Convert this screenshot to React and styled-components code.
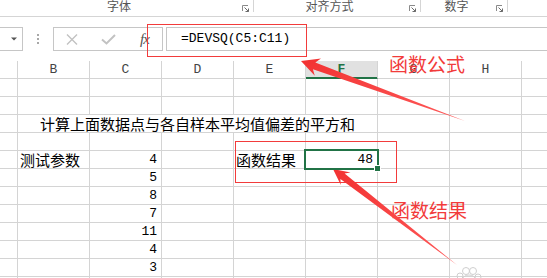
import React from 'react'
import styled, { createGlobalStyle } from 'styled-components'

const GlobalStyle = createGlobalStyle`
  html, body {
    margin: 0;
    padding: 0;
    background: #fff;
  }
  body {
    width: 547px;
    height: 278px;
    overflow: hidden;
    font-family: 'Noto Sans CJK SC', 'Noto Sans', sans-serif;
  }
`

const GRID = '#d4d4d4'
const GREEN = '#217346'
const RED = '#f23b3b'

const Screen = styled.div`
  position: relative;
  width: 547px;
  height: 278px;
  overflow: hidden;
  background: #fff;
`

const Ribbon = styled.div`
  display: flex;
  height: 16px;
  border-bottom: 1px solid #d5d5d5;
`

const Group = styled.div`
  display: flex;
  width: ${p => p.$w}px;
  height: 12px;
  border-right: 1px solid #d5d5d5;
`

const GroupLabel = styled.div`
  flex: 1;
  text-align: center;
  font-size: 12px;
  line-height: 14px;
  margin-top: -1px;
  color: #555;
`

const Launcher = styled.div`
  width: 15px;
  padding: 5px 0 0 4px;
  box-sizing: border-box;
  line-height: 0;
`

const FormulaBar = styled.div`
  display: flex;
  height: 24px;
  margin-top: 10px;
`

const NameBox = styled.div`
  width: 23px;
  border: 1px solid #c6c6c6;
  border-left: none;
  display: flex;
  align-items: center;
  padding-left: 11px;
  box-sizing: border-box;
`

const Grip = styled.div`
  width: 30px;
  display: flex;
  flex-direction: column;
  align-items: center;
  justify-content: center;
  gap: 2px;
`

const GripDot = styled.span`
  width: 2px;
  height: 2px;
  background: #a8a8a8;
`

const ButtonBox = styled.div`
  display: flex;
  border: 1px solid #c6c6c6;
`

const BarButton = styled.div`
  width: 36px;
  display: flex;
  align-items: center;
  justify-content: center;
`

const Fx = styled.span`
  font-family: 'Liberation Serif', serif;
  font-style: italic;
  font-size: 15px;
  color: #555;
  letter-spacing: -1px;
  margin-left: 1px;
`

const FormulaInput = styled.div`
  flex: 1;
  margin-left: 3px;
  border: 1px solid #c6c6c6;
  border-right: none;
  padding-left: 14px;
  font-family: 'Liberation Mono', monospace;
  font-size: 13px;
  line-height: 22px;
  color: #000;
`

const Sheet = styled.div`
  display: grid;
  grid-template-columns: 18px repeat(8, 72px);
  grid-auto-rows: 18px;
  margin-top: 10px;
`

const HeadCell = styled.div`
  box-sizing: border-box;
  border-right: 1px solid ${GRID};
  border-bottom: 1px solid ${p => (p.$active ? GREEN : GRID)};
  box-shadow: ${p => (p.$active ? `inset 0 -1px 0 ${GREEN}` : 'none')};
  background: ${p => (p.$active ? '#e1e1e1' : '#fff')};
  color: ${p => (p.$active ? GREEN : '#444')};
  font-family: 'Liberation Mono', monospace;
  font-weight: ${p => (p.$active ? 700 : 400)};
  font-size: 13px;
  line-height: 18px;
  text-align: center;
`

const Cell = styled.div`
  position: relative;
  box-sizing: border-box;
  grid-column: span ${p => p.$span};
  border-right: 1px solid ${GRID};
  border-bottom: 1px solid ${GRID};
  padding: 0 ${p => (p.$num ? '4px' : '2px')} 0 ${p => p.$indent}px;
  text-align: ${p => (p.$num ? 'right' : 'left')};
  font-family: ${p => (p.$num ? "'Liberation Mono', monospace" : "'Noto Sans CJK SC', sans-serif")};
  font-size: ${p => (p.$num ? '13px' : '15px')};
  line-height: 17px;
  color: #000;
  white-space: nowrap;
  z-index: ${p => (p.$selected ? 2 : 0)};

  ${p =>
    p.$selected &&
    `
    &::after {
      content: '';
      position: absolute;
      top: -2px;
      left: -2px;
      right: -2px;
      bottom: -2px;
      border: 2px solid ${GREEN};
    }
    &::before {
      content: '';
      position: absolute;
      right: -4px;
      bottom: -4px;
      width: 5px;
      height: 5px;
      background: ${GREEN};
      border: 1px solid #fff;
      z-index: 3;
    }
  `}
`

const Frame = styled.div`
  position: absolute;
  left: ${p => p.$x}px;
  top: ${p => p.$y}px;
  width: ${p => p.$w}px;
  height: ${p => p.$h}px;
  box-sizing: border-box;
  border: 1px solid ${RED};
  pointer-events: none;
`

const Note = styled.div`
  position: absolute;
  left: ${p => p.$x}px;
  top: ${p => p.$y}px;
  font-family: 'Noto Sans CJK SC', sans-serif;
  font-size: 19px;
  line-height: 19px;
  color: ${RED};
  white-space: nowrap;
`

const Overlay = styled.svg`
  position: absolute;
  left: 0;
  top: 0;
  pointer-events: none;
`

const LauncherIcon = () => (
  <svg width="7" height="7" viewBox="0 0 7 7">
    <path d="M0.5 6V0.5H6" fill="none" stroke="#8a8a8a" strokeWidth="1" />
    <path d="M2.5 2.5L6.5 6.5M6.5 3.5V6.5H3.5" fill="none" stroke="#6a6a6a" strokeWidth="1" />
  </svg>
)

const letters = ['A', 'B', 'C', 'D', 'E', 'F', 'G', 'H', 'I']

const rows = [
  {},
  {},
  { B: { v: '计算上面数据点与各自样本平均值偏差的平方和', span: 5, indent: 22 } },
  {},
  { B: { v: '测试参数' }, C: { v: 4 }, E: { v: '函数结果' }, F: { v: 48, selected: true } },
  { C: { v: 5 } },
  { C: { v: 8 } },
  { C: { v: 7 } },
  { C: { v: 11 } },
  { C: { v: 4 } },
  { C: { v: 3 } },
  {},
]

const App = () => {
  return (
    <Screen>
      <GlobalStyle />
      <Ribbon>
        <Group $w={253}>
          <GroupLabel>字体</GroupLabel>
          <Launcher><LauncherIcon /></Launcher>
        </Group>
        <Group $w={166}>
          <GroupLabel>对齐方式</GroupLabel>
          <Launcher><LauncherIcon /></Launcher>
        </Group>
        <Group $w={86}>
          <GroupLabel>数字</GroupLabel>
          <Launcher><LauncherIcon /></Launcher>
        </Group>
      </Ribbon>

      <FormulaBar>
        <NameBox>
          <svg width="6" height="4" viewBox="0 0 6 4">
            <path d="M0 0.5H6L3 3.5Z" fill="#555" />
          </svg>
        </NameBox>
        <Grip>
          <GripDot />
          <GripDot />
          <GripDot />
        </Grip>
        <ButtonBox>
          <BarButton>
            <svg width="12" height="11" viewBox="0 0 12 11">
              <path d="M1 0.5L11 10.5M11 0.5L1 10.5" stroke="#c2c2c2" strokeWidth="1.4" />
            </svg>
          </BarButton>
          <BarButton>
            <svg width="15" height="11" viewBox="0 0 15 11">
              <path d="M1 5.5L5.5 9.5L14 1" fill="none" stroke="#c2c2c2" strokeWidth="2" />
            </svg>
          </BarButton>
          <BarButton>
            <Fx>fx</Fx>
          </BarButton>
        </ButtonBox>
        <FormulaInput>=DEVSQ(C5:C11)</FormulaInput>
      </FormulaBar>

      <Sheet>
        {letters.map(l => (
          <HeadCell key={l} $active={l === 'F'}>
            {l === 'A' || l === 'I' ? '' : l}
          </HeadCell>
        ))}
        {rows.map((row, r) => {
          const cells = []
          for (let c = 0; c < letters.length; c++) {
            const d = row[letters[c]]
            const span = (d && d.span) || 1
            cells.push(
              <Cell
                key={`${r}-${c}`}
                $span={span}
                $num={d && typeof d.v === 'number'}
                $indent={(d && d.indent) || (d && typeof d.v === 'number' ? 0 : 2)}
                $selected={d && d.selected}
              >
                {d ? d.v : ''}
              </Cell>
            )
            c += span - 1
          }
          return <React.Fragment key={r}>{cells}</React.Fragment>
        })}
      </Sheet>

      <Frame $x={147} $y={24} $w={160} $h={33} />
      <Frame $x={235} $y={141} $w={162} $h={42} />

      <Note $x={389} $y={54}>函数公式</Note>
      <Note $x={391} $y={200}>函数结果</Note>

      <Overlay width="547" height="278" viewBox="0 0 547 278">
        <defs>
          <linearGradient id="arrowRed" x1="0" y1="0" x2="1" y2="1">
            <stop offset="0" stopColor="#f23232" />
            <stop offset="1" stopColor="#ff5a5a" />
          </linearGradient>
        </defs>
        <polygon
          points="301,61 321,58.5 315.3,62.6 465,121 312.9,69.2 314.8,75.8"
          fill="url(#arrowRed)"
        />
        <polygon
          points="333,169 350.6,172.5 344.6,173.5 457,265 340.4,179.1 340.8,185.1"
          fill="url(#arrowRed)"
        />
        <g fill="none" stroke="#cfcfcf" strokeWidth="1">
          <circle cx="466" cy="271" r="3.5" />
          <circle cx="473" cy="271" r="3.5" />
          <circle cx="460" cy="276" r="3" />
          <circle cx="478" cy="277" r="3" />
          <ellipse cx="469" cy="279" rx="6" ry="4" />
        </g>
      </Overlay>
    </Screen>
  )
}

export default App
